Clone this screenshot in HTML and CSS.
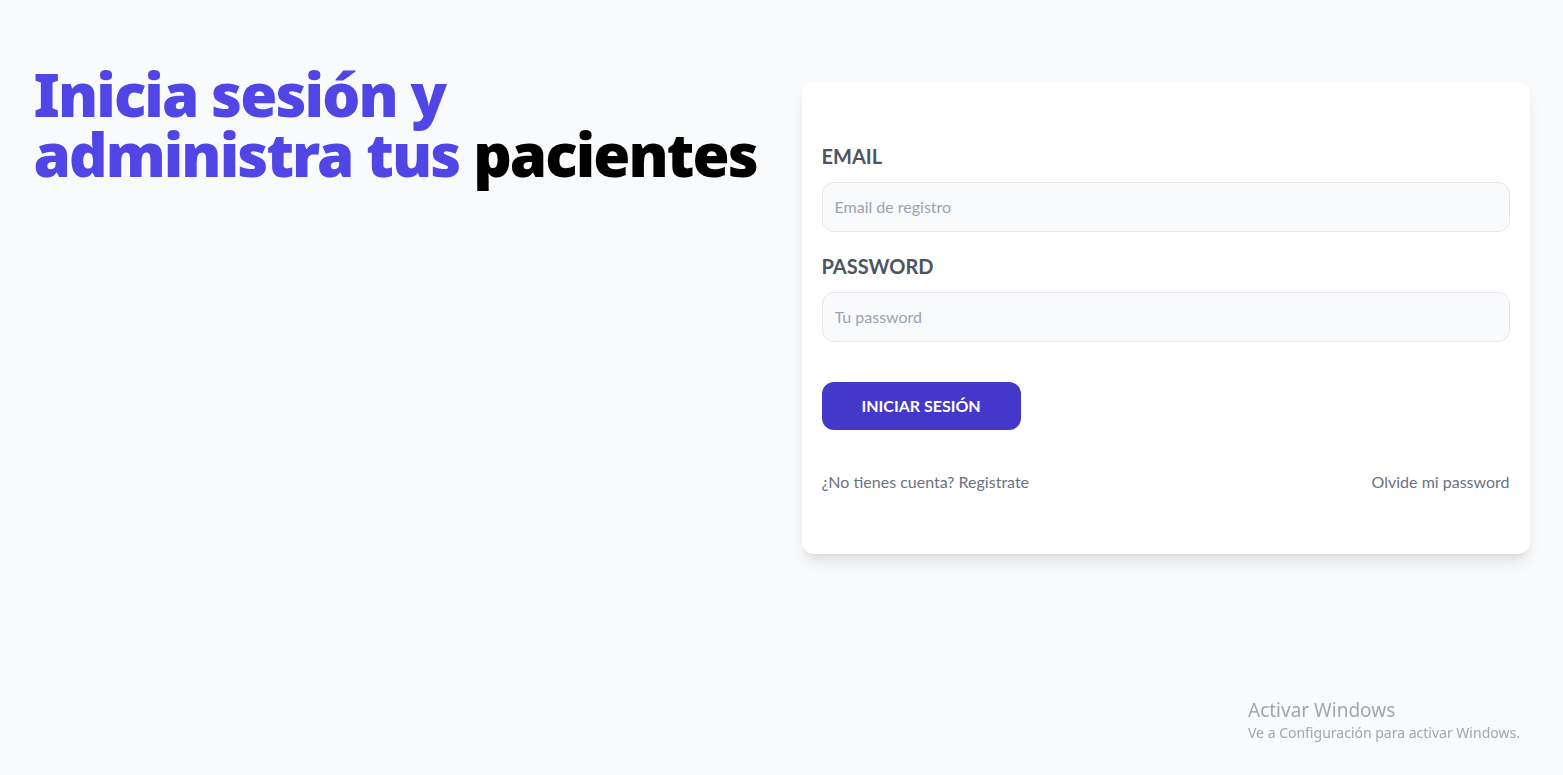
FILE: index.html
```html
<!DOCTYPE html>
<html lang="es">
<head>
<meta charset="utf-8">
<title>Iniciar sesión</title>
<link rel="stylesheet" href="styles.css">
</head>
<body>
<main class="page">
  <div class="intro">
    <h1 class="title">Inicia sesión y administra tus <span class="title-dark">pacientes</span></h1>
  </div>
  <div class="card">
    <form class="form">
      <div class="field">
        <label class="label" for="email">Email</label>
        <input class="input" id="email" type="email" placeholder="Email de registro">
      </div>
      <div class="field">
        <label class="label" for="password">Password</label>
        <input class="input" id="password" type="password" placeholder="Tu password">
      </div>
      <button class="btn" type="button">Iniciar Sesión</button>
    </form>
    <nav class="links">
      <a class="link" href="#">¿No tienes cuenta? Registrate</a>
      <a class="link" href="#">Olvide mi password</a>
    </nav>
  </div>
</main>
<div class="watermark">
  <div class="wm-title">Activar Windows</div>
  <div class="wm-sub">Ve a Configuración para activar Windows.</div>
</div>
</body>
</html>
```

FILE: styles.css
```css
* { box-sizing: border-box; }
html, body { margin: 0; padding: 0; }
body {
  background: #f9fafb;
  font-family: "Segoe UI", Lato, "Noto Sans", sans-serif;
  color: #111827;
  min-height: 100vh;
}
.page {
  max-width: 1536px;
  margin: 0 auto;
  padding: 20px;
  display: grid;
  grid-template-columns: 1fr 1fr;
  column-gap: 40px;
  align-items: start;
}
.intro { padding-top: 44px; }
.title {
  margin: 0;
  font-family: "Noto Sans", "Open Sans", sans-serif;
  font-size: 60px;
  line-height: 60px;
  font-weight: 900;
  letter-spacing: -1.9px;
  color: #4f46e5;
}
.title-dark { color: #000; }
.card {
  margin-top: 62px;
  background: #fff;
  border-radius: 12px;
  padding: 40px 20px;
  box-shadow: 0 10px 15px -3px rgba(0,0,0,0.1), 0 4px 6px -4px rgba(0,0,0,0.1);
}
.form { margin: 20px 0; }
.field { margin: 20px 0; }
.field:first-child { margin-top: 0; }
.label {
  display: block;
  text-transform: uppercase;
  color: #4b5563;
  font-size: 20px;
  line-height: 28px;
  font-weight: 700;
}
.input {
  display: block;
  width: 100%;
  margin-top: 12px;
  padding: 12px;
  border: 1px solid #e5e7eb;
  border-radius: 12px;
  background: #f9fafb;
  font-family: inherit;
  font-size: 16px;
  line-height: 24px;
  color: #111827;
}
.input::placeholder { color: #9ca3af; }
.btn {
  display: inline-block;
  margin-top: 20px;
  background: #4338ca;
  color: #fff;
  border: 0;
  border-radius: 12px;
  padding: 12px 40px;
  font-family: inherit;
  font-size: 16px;
  line-height: 24px;
  font-weight: 700;
  text-transform: uppercase;
  cursor: pointer;
}
.links {
  margin-top: 40px;
  margin-bottom: 20px;
  display: flex;
  justify-content: space-between;
}
.link {
  color: #6b7280;
  text-decoration: none;
  font-size: 16px;
  line-height: 24px;
}
.watermark {
  position: fixed;
  left: 1248px;
  top: 697px;
  color: #a3a6ab;
  font-family: "Noto Sans", sans-serif;
  pointer-events: none;
}
.wm-title { font-size: 19px; line-height: 26px; }
.wm-sub { font-size: 14px; line-height: 19px; }
```
